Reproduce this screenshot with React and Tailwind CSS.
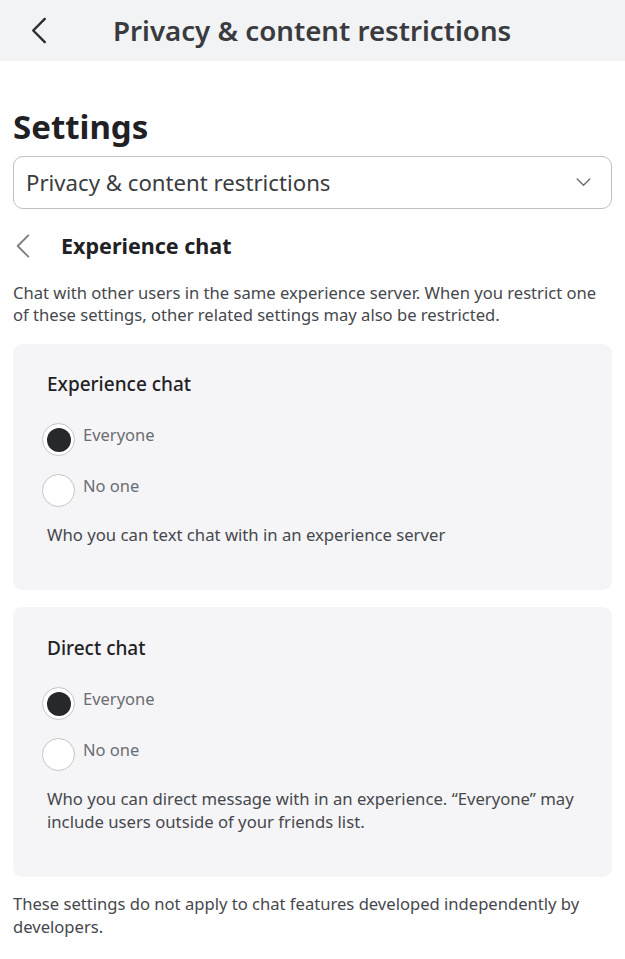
import { useState } from "react";

const font = { fontFamily: '"Noto Sans", "Open Sans", sans-serif' };

function Chevron({ className, color = "#2b2d31", width = 2.5 }) {
  return (
    <svg viewBox="0 0 18 28" className={className} fill="none">
      <path d="M15 2 L3 14 L15 26" stroke={color} strokeWidth={width} strokeLinecap="round" strokeLinejoin="round" />
    </svg>
  );
}

function Radio({ checked, label, onClick }) {
  return (
    <button onClick={onClick} className="flex items-start gap-[8px] text-left">
      <span className="w-[33px] h-[33px] rounded-full border-[1.5px] border-[#c4c5c9] bg-white flex items-center justify-center shrink-0">
        {checked && <span className="w-[24px] h-[24px] rounded-full bg-[#26282c]" />}
      </span>
      <span className="text-[16.5px] leading-[22px] text-[#6b6d73] mt-[1px]">{label}</span>
    </button>
  );
}

function Card({ title, desc, className }) {
  // "everyone" selected by default
  const [value, setValue] = useState("everyone");
  return (
    <div className={`bg-[#f5f5f7] rounded-[9px] px-[34px] ${className}`}>
      <h3 className="text-[19px] leading-[26px] font-medium text-[#1f2125]">{title}</h3>
      <div className="flex flex-col gap-[18px] mt-[26px] ml-[-5px]">
        <Radio checked={value === "everyone"} label="Everyone" onClick={() => setValue("everyone")} />
        <Radio checked={value === "none"} label="No one" onClick={() => setValue("none")} />
      </div>
      <p className="mt-[16px] text-[16.7px] leading-[23px] text-[#46484d]">{desc}</p>
    </div>
  );
}

export default function App() {
  return (
    <div className="w-[625px] min-h-[959px] bg-white" style={font}>
      <div className="h-[61px] bg-[#f2f3f5] flex items-center">
        <Chevron className="w-[18px] h-[27px] ml-[30px]" />
        <h1 className="ml-[65px] text-[27.7px] font-semibold text-[#393b3f] leading-none">
          Privacy &amp; content restrictions
        </h1>
      </div>

      <div className="px-[13px]">
        <h2 className="mt-[44px] text-[33px] leading-[44px] font-bold text-[#1f2125]">Settings</h2>

        <button className="mt-[7px] w-full h-[53px] rounded-[10px] border border-[#bfc0c4] flex items-center justify-between pl-[12px] pr-[20px]">
          <span className="text-[22.2px] text-[#3a3c40]">Privacy &amp; content restrictions</span>
          <svg viewBox="0 0 16 10" className="w-[15px] h-[9px]" fill="none">
            <path d="M1 1 L8 8 L15 1" stroke="#6b6d73" strokeWidth="1.5" strokeLinecap="round" strokeLinejoin="round" />
          </svg>
        </button>

        <div className="mt-[21px] flex items-center">
          <Chevron className="w-[16px] h-[26px] ml-[2px]" color="#7a7c80" width={2} />
          <h2 className="ml-[30px] text-[21.5px] font-bold text-[#1f2125]">Experience chat</h2>
        </div>

        <p className="mt-[20px] text-[16.6px] leading-[22px] text-[#46484d]">
          Chat with other users in the same experience server. When you restrict one of these settings, other related settings may also be restricted.
        </p>

        <Card
          className="mt-[18px] pt-[27px] h-[246px]"
          title="Experience chat"
          desc="Who you can text chat with in an experience server"
        />
        <Card
          className="mt-[17px] pt-[28px] h-[270px]"
          title="Direct chat"
          desc={"Who you can direct message with in an experience. \u201cEveryone\u201d may include users outside of your friends list."}
        />

        <p className="mt-[15px] text-[16.6px] leading-[23px] text-[#46484d]">
          These settings do not apply to chat features developed independently by developers.
        </p>
      </div>
    </div>
  );
}
